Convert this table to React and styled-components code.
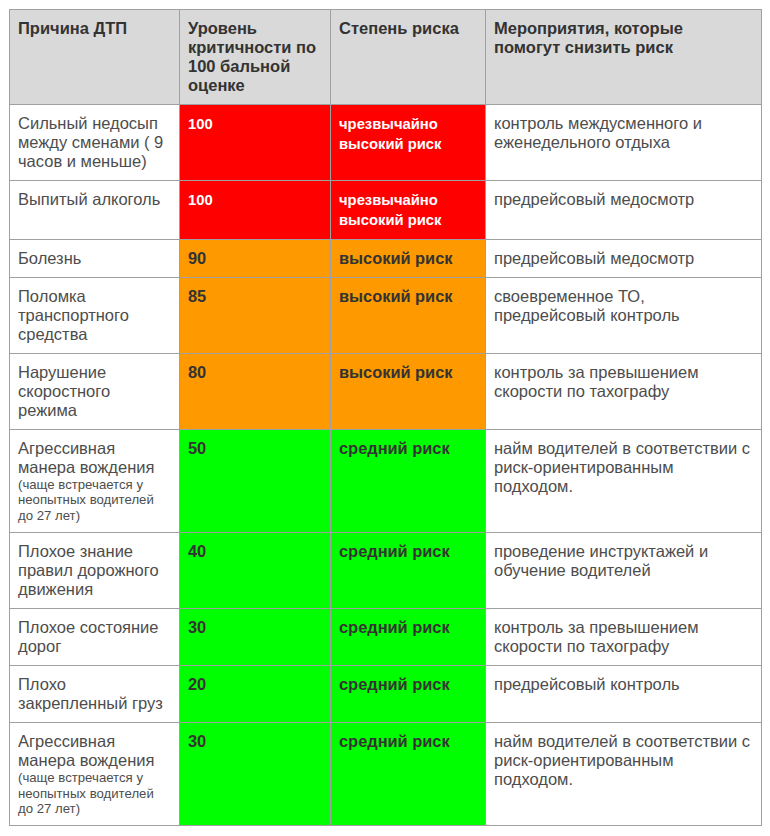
import React from "react";
import styled, { createGlobalStyle } from "styled-components";

const Global = createGlobalStyle`
  html, body { margin: 0; padding: 0; background: #ffffff; }
  body { font-family: "Liberation Sans", Arial, sans-serif; }
`;

const Page = styled.div`
  padding: 9px 0 0 9px;
`;

const Table = styled.div`
  display: grid;
  width: 753px;
  border-top: 1px solid #a0a0a0;
  border-left: 1px solid #a0a0a0;
  box-sizing: border-box;
`;

const Row = styled.div`
  display: grid;
  grid-template-columns: 170px 151px 155px 276px;
`;

const Cell = styled.div`
  box-sizing: border-box;
  border-right: 1px solid #a0a0a0;
  border-bottom: 1px solid #a0a0a0;
  padding: 9px 8px;
  font-size: 16.5px;
  line-height: 19px;
  color: #4d4d4d;
  background: ${(p) => p.$bg || "#ffffff"};
`;

const HeadCell = styled(Cell)`
  background: #d9d9d9;
  color: #333333;
  font-weight: bold;
`;

const LevelCell = styled(Cell)`
  font-size: ${(p) => p.$size};
  line-height: ${(p) => p.$lh};
  font-weight: bold;
  color: ${(p) => p.$fg};
`;

const Note = styled.div`
  font-size: 13.2px;
  line-height: 15.4px;
`;

const palette = {
  red: { bg: "#ff0000", fg: "#ffffff", size: "14.8px", lh: "20px" },
  orange: { bg: "#ff9900", fg: "#333333", size: "16.4px", lh: "19px" },
  green: { bg: "#00ff00", fg: "#333333", size: "16.4px", lh: "19px" },
};

const rows = [
  { cause: "Сильный недосып между сменами ( 9 часов и меньше)", score: 100, tone: "red", risk: "чрезвычайно высокий риск", action: "контроль междусменного и еженедельного отдыха" },
  { cause: "Выпитый алкоголь", score: 100, tone: "red", risk: "чрезвычайно высокий риск", action: "предрейсовый медосмотр" },
  { cause: "Болезнь", score: 90, tone: "orange", risk: "высокий риск", action: "предрейсовый медосмотр" },
  { cause: "Поломка транспортного средства", score: 85, tone: "orange", risk: "высокий риск", action: "своевременное ТО, предрейсовый контроль" },
  { cause: "Нарушение скоростного режима", score: 80, tone: "orange", risk: "высокий риск", action: "контроль за превышением скорости по тахографу" },
  { cause: "Агрессивная манера вождения", note: "(чаще встречается у неопытных водителей до 27 лет)", score: 50, tone: "green", risk: "средний риск", action: "найм водителей в соответствии с риск-ориентированным подходом." },
  { cause: "Плохое знание правил дорожного движения", score: 40, tone: "green", risk: "средний риск", action: "проведение инструктажей и обучение водителей" },
  { cause: "Плохое состояние дорог", score: 30, tone: "green", risk: "средний риск", action: "контроль за превышением скорости по тахографу" },
  { cause: ["Плохо", "закрепленный груз"], score: 20, tone: "green", risk: "средний риск", action: "предрейсовый контроль" },
  { cause: "Агрессивная манера вождения", note: "(чаще встречается у неопытных водителей до 27 лет)", score: 30, tone: "green", risk: "средний риск", action: "найм водителей в соответствии с риск-ориентированным подходом." },
];

export default function App() {
  return (
    <Page>
      <Global />
      <Table>
        <Row>
          <HeadCell>Причина ДТП</HeadCell>
          <HeadCell>Уровень критичности по 100 бальной оценке</HeadCell>
          <HeadCell>Степень риска</HeadCell>
          <HeadCell>Мероприятия, которые помогут снизить риск</HeadCell>
        </Row>
        {rows.map((r, i) => {
          const c = palette[r.tone];
          return (
            <Row key={i}>
              <Cell>
                {Array.isArray(r.cause)
                  ? r.cause.map((t, j) => <div key={j}>{t}</div>)
                  : r.cause}
                {r.note && <Note>{r.note}</Note>}
              </Cell>
              <LevelCell $bg={c.bg} $fg={c.fg} $size={c.size} $lh={c.lh}>{r.score}</LevelCell>
              <LevelCell $bg={c.bg} $fg={c.fg} $size={c.size} $lh={c.lh}>{r.risk}</LevelCell>
              <Cell>{r.action}</Cell>
            </Row>
          );
        })}
      </Table>
    </Page>
  );
}
